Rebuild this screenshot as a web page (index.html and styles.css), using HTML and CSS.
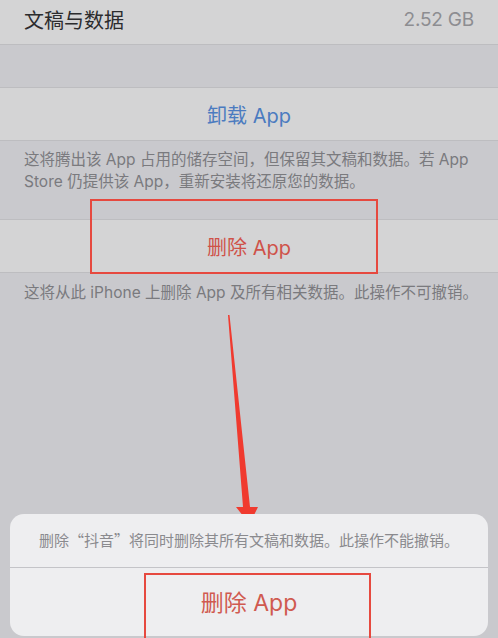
FILE: index.html
```html
<!DOCTYPE html>
<html lang="zh-CN">
<head>
<meta charset="utf-8">
<title>删除 App</title>
<link rel="stylesheet" href="styles.css">
</head>
<body>
<div class="screen">
  <div class="row top-row">
    <span class="label">文稿与数据</span>
    <span class="value">2.52 GB</span>
  </div>
  <div class="gap"></div>
  <div class="row action blue">卸载 App</div>
  <p class="note note-first">这将腾出该 App 占用的储存空间，但保留其文稿和数据。若 App<br>Store 仍提供该 App，重新安装将还原您的数据。</p>
  <div class="row action red">删除 App</div>
  <p class="note note-second">这将从此 iPhone 上删除 App 及所有相关数据。此操作不可撤销。</p>

  <div class="mark mark-top"></div>

  <svg class="arrow" width="498" height="638" viewBox="0 0 498 638" aria-hidden="true">
    <polygon points="228,315 229.5,315 250,507 258,507 249.5,524 236,507 243,507" fill="#f03a2f"/>
  </svg>

  <div class="sheet">
    <div class="sheet-msg">删除<span class="cjk">“</span>抖音<span class="cjk">”</span>将同时删除其所有文稿和数据。此操作不能撤销。</div>
    <div class="sheet-btn">删除 App</div>
  </div>

  <div class="mark mark-bottom"></div>
</div>
</body>
</html>
```
FILE: styles.css
```css
* { box-sizing: border-box; }
html, body {
  margin: 0;
  padding: 0;
}
body {
  font-family: "Inter", "Noto Sans CJK SC", sans-serif;
  background: #c9c9cd;
}
.screen {
  position: relative;
  width: 498px;
  height: 638px;
  overflow: hidden;
  background: #c9c9cd;
}
.row {
  display: flex;
  align-items: center;
  background: #d4d4d5;
}
.top-row {
  height: 45px;
  padding: 0 24px 5px;
  justify-content: space-between;
  border-bottom: 1px solid #bdbdc0;
}
.label {
  font-size: 20px;
  color: #2c2c2e;
}
.value {
  font-size: 19px;
  color: #8d8d91;
  letter-spacing: -0.2px;
}
.gap {
  height: 42px;
}
.action {
  height: 54px;
  justify-content: center;
  border-top: 1px solid #bdbdc0;
  border-bottom: 1px solid #bdbdc0;
  font-size: 20px;
}
.blue { color: #4b7bc0; }
.red { color: #cf5249; }
.note {
  margin: 0;
  padding: 8px 20px 0 24px;
  font-size: 15.5px;
  line-height: 22px;
  color: #7a7a7e;
  white-space: nowrap;
}
.note-first {
  height: 78px;
}
.note-second {
  padding-top: 9px;
}
.mark {
  position: absolute;
  border: 2px solid #e6493f;
}
.mark-top {
  left: 90px;
  top: 199px;
  width: 288px;
  height: 75px;
}
.mark-bottom {
  left: 144px;
  top: 573px;
  width: 227px;
  height: 80px;
}
.arrow {
  position: absolute;
  left: 0;
  top: 0;
}
.sheet {
  position: absolute;
  left: 10px;
  top: 514px;
  width: 478px;
  height: 122px;
  border-radius: 14px;
  background: #eeeef0;
  display: flex;
  flex-direction: column;
  overflow: hidden;
}
.sheet-msg {
  height: 54px;
  display: flex;
  align-items: center;
  justify-content: center;
  padding-bottom: 3px;
  font-size: 15px;
  color: #8a8a8e;
  border-bottom: 1px solid #c4c4c8;
}
.cjk {
  font-family: "Noto Sans CJK SC", sans-serif;
}
.sheet-btn {
  flex: 1;
  display: flex;
  align-items: center;
  justify-content: center;
  padding-bottom: 2px;
  font-size: 23px;
  color: #d05a50;
}
```
